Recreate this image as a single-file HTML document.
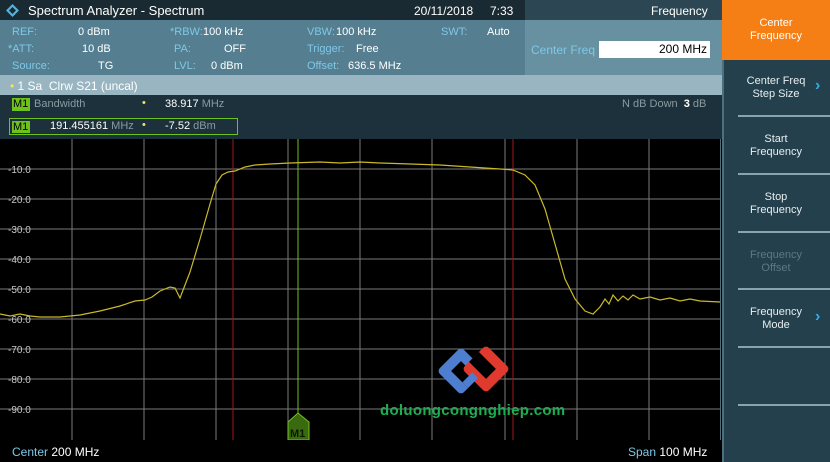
<!DOCTYPE html><html><head><style>
body{margin:0;width:830px;height:462px;overflow:hidden;background:#000;font-family:"Liberation Sans",sans-serif;position:relative}
div{position:absolute;box-sizing:border-box}
.t{white-space:nowrap;font-size:11px}
.lb{color:#7ec8e8}.w{color:#fff}
.sk{left:722px;width:108px;color:#e8eef0;font-size:11px;text-align:center;line-height:13px}
.sep{left:738px;width:92px;height:2px;background:#8aa3ad}
</style></head><body>
<div style="left:0;top:0;width:525px;height:20px;background:#1a2a32"></div>
<div style="left:525px;top:0;width:197px;height:20px;background:#2c4753"></div>
<div style="left:0;top:20px;width:525px;height:55px;background:#557f90"></div>
<div style="left:525px;top:20px;width:197px;height:55px;background:#6790a0"></div>
<div style="left:0;top:75px;width:722px;height:20px;background:#98b5c1"></div>
<div style="left:0;top:95px;width:722px;height:44px;background:#1c313b"></div>
<div style="left:722px;top:0;width:108px;height:462px;background:#24404c;border-left:2px solid #4e6f7c"></div>
<div style="left:722px;top:0;width:108px;height:60px;background:#f57f14"></div>
<svg style="position:absolute;left:5px;top:3px" width="15" height="15"><path d="M7.5 1L14 7.5 7.5 14 1 7.5z" fill="#5ab0d8"/><path d="M7.5 4L11 7.5 7.5 11 4 7.5z" fill="#1a2a32"/></svg>
<div class="t w" style="left:28px;top:3px;font-size:13px">Spectrum Analyzer - Spectrum</div>
<div class="t w" style="left:414px;top:4px;font-size:12px">20/11/2018</div>
<div class="t w" style="left:490px;top:4px;font-size:12px">7:33</div>
<div class="t w" style="left:651px;top:4px;font-size:12px">Frequency</div>
<div class="t lb" style="left:12px;top:26px">REF:</div><div class="t w" style="left:78px;top:26px">0 dBm</div>
<div class="t lb" style="left:8px;top:43px">*ATT:</div><div class="t w" style="left:82px;top:43px">10 dB</div>
<div class="t lb" style="left:12px;top:60px">Source:</div><div class="t w" style="left:98px;top:60px">TG</div>
<div class="t lb" style="left:170px;top:26px">*RBW:</div><div class="t w" style="left:203px;top:26px">100 kHz</div>
<div class="t lb" style="left:174px;top:43px">PA:</div><div class="t w" style="left:224px;top:43px">OFF</div>
<div class="t lb" style="left:174px;top:60px">LVL:</div><div class="t w" style="left:211px;top:60px">0 dBm</div>
<div class="t lb" style="left:307px;top:26px">VBW:</div><div class="t w" style="left:336px;top:26px">100 kHz</div>
<div class="t lb" style="left:307px;top:43px">Trigger:</div><div class="t w" style="left:356px;top:43px">Free</div>
<div class="t lb" style="left:307px;top:60px">Offset:</div><div class="t w" style="left:348px;top:60px">636.5 MHz</div>
<div class="t lb" style="left:441px;top:26px">SWT:</div><div class="t w" style="left:487px;top:26px">Auto</div>
<div class="t lb" style="left:531px;top:43px;font-size:12px">Center Freq</div>
<div style="left:599px;top:41px;width:111px;height:17px;background:#fff;color:#000;font-size:12px;text-align:right;padding:1px 3px 0 0">200 MHz</div>
<div class="t w" style="left:10px;top:79px;font-size:12px"><span style="color:#f3e35a">•</span> 1 Sa &nbsp;Clrw S21 (uncal)</div>
<div style="left:12px;top:98px;width:18px;height:13px;background:#6ec21c;color:#000;font-size:11px;padding-left:1px">M1</div>
<div class="t" style="left:34px;top:98px;color:#8a9aa2">Bandwidth</div>
<div class="t" style="left:142px;top:97px;color:#f3e35a">•</div>
<div class="t w" style="left:165px;top:98px">38.917 <span style="color:#8a9aa2">MHz</span></div>
<div class="t" style="left:622px;top:98px;color:#8a9aa2">N dB Down &nbsp;<b style="color:#fff">3</b> dB</div>
<div style="left:9px;top:118px;width:229px;height:17px;border:1px solid #6ec21c"></div>
<div style="left:12px;top:121px;width:18px;height:12px;background:#6ec21c;color:#000;font-size:11px;padding-left:1px;line-height:12px">M1</div>
<div class="t w" style="left:50px;top:120px">191.455161 <span style="color:#8a9aa2">MHz</span></div>
<div class="t" style="left:142px;top:119px;color:#f3e35a">•</div>
<div class="t w" style="left:165px;top:120px">-7.52 <span style="color:#8a9aa2">dBm</span></div>
<svg style="position:absolute;left:0;top:139px" width="722" height="301">
<g stroke="#7a7a7a" stroke-width="1">
<line x1="72" y1="0" x2="72" y2="301"/><line x1="144" y1="0" x2="144" y2="301"/><line x1="216" y1="0" x2="216" y2="301"/><line x1="288" y1="0" x2="288" y2="301"/><line x1="360" y1="0" x2="360" y2="301"/><line x1="432" y1="0" x2="432" y2="301"/><line x1="505" y1="0" x2="505" y2="301"/><line x1="577" y1="0" x2="577" y2="301"/><line x1="649" y1="0" x2="649" y2="301"/>
<line x1="0" y1="30" x2="720" y2="30"/><line x1="0" y1="60" x2="720" y2="60"/><line x1="0" y1="90" x2="720" y2="90"/><line x1="0" y1="120" x2="720" y2="120"/><line x1="0" y1="150" x2="720" y2="150"/><line x1="0" y1="180" x2="720" y2="180"/><line x1="0" y1="210" x2="720" y2="210"/><line x1="0" y1="240" x2="720" y2="240"/><line x1="0" y1="270" x2="720" y2="270"/>
</g>
<line x1="720.5" y1="0" x2="720.5" y2="301" stroke="#4e6f7c"/>
<line x1="233" y1="0" x2="233" y2="301" stroke="#a01818"/><line x1="513" y1="0" x2="513" y2="301" stroke="#a01818"/>
<line x1="298" y1="0" x2="298" y2="276" stroke="#6ec21c"/>
<g fill="#c8c8c8" font-size="10" font-family="Liberation Sans">
<text x="8" y="34">-10.0</text><text x="8" y="64">-20.0</text><text x="8" y="94">-30.0</text><text x="8" y="124">-40.0</text><text x="8" y="154">-50.0</text><text x="8" y="184">-60.0</text><text x="8" y="214">-70.0</text><text x="8" y="244">-80.0</text><text x="8" y="274">-90.0</text></g>
<polyline fill="none" stroke="#c9b92a" stroke-width="1.2" points="0,175 10,177 20,175 30,177 40,178 60,178 80,176 100,172 120,167 135,162 145,161 152,158 160,152 170,148 175,149 180,159 190,133 200,100 210,65 216,45 222,36 228,33 235,32 245,28 255,26 270,25 290,24 320,23 340,24 360,23 380,24 410,25 440,26 470,28 500,30 513,31 525,36 535,46 545,70 555,105 565,140 575,160 585,172 593,175 600,168 605,160 609,165 613,156 618,162 623,157 628,161 633,156 640,160 650,158 660,161 670,159 680,162 690,160 700,162 720,163"/>
<path d="M288 283 L298 274 L309 283 L309 301 L288 301Z" fill="#3a6a10" stroke="#6ec21c"/>
<text x="290" y="298" font-size="11" font-family="Liberation Sans" fill="#0a1a00" font-weight="bold">M1</text>
</svg>
<svg style="position:absolute;left:436px;top:343px" width="75" height="56">
<g transform="rotate(45 25 28)"><rect x="8" y="11" width="34" height="34" rx="4" fill="#4d7ed0"/><rect x="18" y="21" width="24" height="14" fill="#000"/></g>
<g transform="rotate(45 50 26)"><rect x="33" y="9" width="34" height="34" rx="4" fill="#e03a2e"/><rect x="33" y="19" width="24" height="14" fill="#000"/></g>
<g transform="rotate(45 25 28)"><rect x="34" y="21" width="8" height="14" fill="#4d7ed0"/></g>
</svg>
<div class="t" style="left:380px;top:402px;font-size:15px;font-weight:bold;color:#1fae52;letter-spacing:0.3px">doluongcongnghiep.com</div>
<div class="t" style="left:12px;top:445px;font-size:12px"><span class="lb">Center</span> <span class="w">200 MHz</span></div>
<div class="t" style="left:628px;top:445px;font-size:12px"><span class="lb">Span</span> <span class="w">100 MHz</span></div>
<div class="sk" style="top:17px;color:#fff">Center<br>Frequency</div>
<div class="sk" style="top:75px">Center Freq<br>Step Size</div>
<div class="t" style="left:815px;top:77px;color:#2fb0e8;font-size:16px;font-weight:bold">›</div>
<div class="sep" style="top:115px"></div>
<div class="sk" style="top:133px">Start<br>Frequency</div>
<div class="sep" style="top:173px"></div>
<div class="sk" style="top:191px">Stop<br>Frequency</div>
<div class="sep" style="top:231px"></div>
<div class="sk" style="top:249px;color:#5d7884">Frequency<br>Offset</div>
<div class="sep" style="top:288px"></div>
<div class="sk" style="top:306px">Frequency<br>Mode</div>
<div class="t" style="left:815px;top:308px;color:#2fb0e8;font-size:16px;font-weight:bold">›</div>
<div class="sep" style="top:346px"></div>
<div class="sep" style="top:404px"></div>
</body></html>
